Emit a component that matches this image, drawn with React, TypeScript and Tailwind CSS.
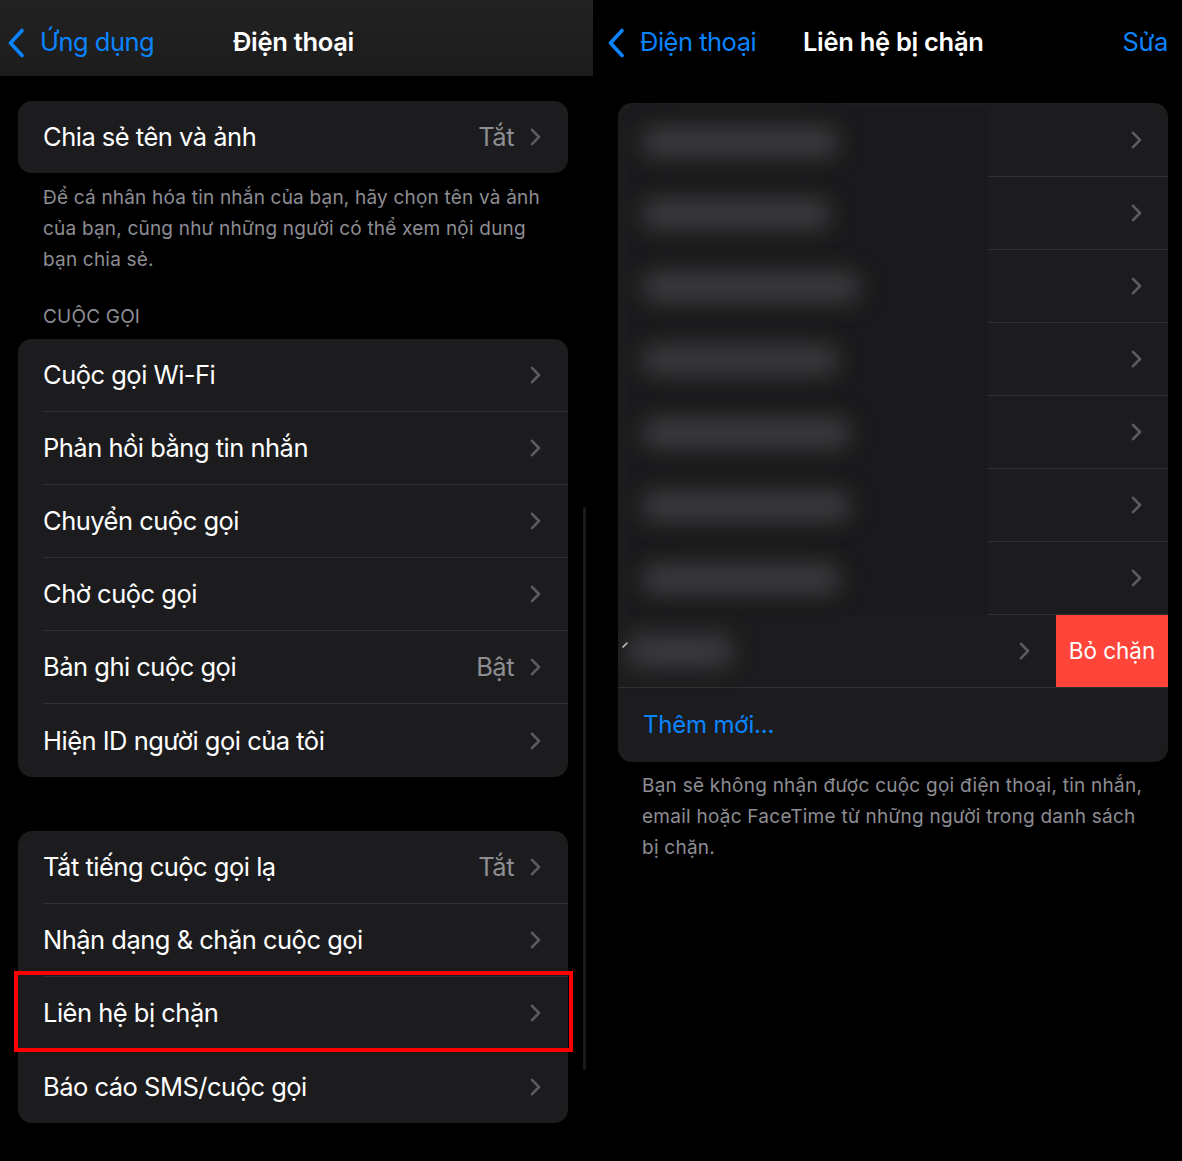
import React from "react";

const Chevron = () => (
  <svg width="11" height="18" viewBox="0 0 11 18" className="shrink-0">
    <path d="M2 1.8l7 7.2-7 7.2" fill="none" stroke="#5c5c60" strokeWidth="2.6" strokeLinecap="round" strokeLinejoin="round" />
  </svg>
);

const BackChevron = () => (
  <svg width="18" height="30" viewBox="0 0 18 30" className="shrink-0">
    <path d="M15 2.5L3.5 15 15 27.5" fill="none" stroke="#0a84ff" strokeWidth="3.6" strokeLinecap="round" strokeLinejoin="round" />
  </svg>
);

function Row({ label, value, last, boxed }: { label: string; value?: string; last?: boolean; boxed?: boolean }) {
  return (
    <div className="relative flex h-[73px] items-stretch pl-[25px]">
      <div className={last ? "flex flex-1 items-center pr-[27px]" : "flex flex-1 items-center border-b border-[#303033] pr-[27px]"}>
        <span className="flex-1 text-[25.5px] leading-none tracking-[-0.5px] text-white">{label}</span>
        {value && <span className="mr-[16px] text-[25.5px] leading-none tracking-[-0.5px] text-[#8e8e93]">{value}</span>}
        <Chevron />
      </div>
      {boxed && (
        <div className="pointer-events-none absolute -top-[6px] -bottom-[2px] -left-[4px] -right-[5px] border-4 border-[#ff0000]" />
      )}
    </div>
  );
}

const blobs = [198, 190, 220, 198, 210, 210, 200];

export default function App() {
  return (
    <div className="flex h-[1161px] w-[1182px] overflow-hidden bg-black font-['Inter','Noto_Sans',sans-serif] antialiased">
      {/* LEFT */}
      <div className="relative flex w-[593px] shrink-0 flex-col">
        <div className="relative flex h-[76px] items-center bg-gradient-to-b from-[#222222] to-[#1c1c1c] pl-[7px] pt-[9px]">
          <BackChevron />
          <span className="ml-[15px] text-[25.5px] tracking-[-0.5px] text-[#0a84ff]">Ứng dụng</span>
          <span className="absolute left-[233px] text-[25.5px] font-semibold tracking-[-0.3px] text-white">Điện thoại</span>
        </div>

        <div className="flex flex-col pl-[18px] pr-[25px] pt-[25px]">
          <div className="overflow-hidden rounded-[14px] bg-[#1c1c1e]">
            <div className="flex h-[72px] items-center pl-[25px] pr-[27px]">
              <span className="flex-1 text-[25.5px] leading-none tracking-[-0.5px] text-white">Chia sẻ tên và ảnh</span>
              <span className="mr-[16px] text-[25.5px] leading-none tracking-[-0.5px] text-[#8e8e93]">Tắt</span>
              <Chevron />
            </div>
          </div>

          <p className="pl-[25px] pt-[9px] text-[19px] leading-[31px] tracking-[0.2px] text-[#8d8d93]">
            Để cá nhân hóa tin nhắn của bạn, hãy chọn tên và ảnh
            <br />
            của bạn, cũng như những người có thể xem nội dung
            <br />
            bạn chia sẻ.
          </p>

          <p className="pl-[25px] pt-[30px] text-[19px] leading-[24px] tracking-[0.2px] text-[#8d8d93]">CUỘC GỌI</p>

          <div className="mt-[10px] overflow-hidden rounded-[14px] bg-[#1c1c1e]">
            <Row label="Cuộc gọi Wi-Fi" />
            <Row label="Phản hồi bằng tin nhắn" />
            <Row label="Chuyển cuộc gọi" />
            <Row label="Chờ cuộc gọi" />
            <Row label="Bản ghi cuộc gọi" value="Bật" />
            <Row label="Hiện ID người gọi của tôi" last />
          </div>

          <div className="mt-[54px] rounded-[14px] bg-[#1c1c1e]">
            <Row label="Tắt tiếng cuộc gọi lạ" value="Tắt" />
            <Row label="Nhận dạng & chặn cuộc gọi" />
            <Row label="Liên hệ bị chặn" boxed />
            <Row label="Báo cáo SMS/cuộc gọi" last />
          </div>
        </div>

        <div className="absolute left-[583px] top-[507px] h-[563px] w-[3px] rounded-full bg-[#1a1a1a]" />
      </div>

      {/* RIGHT */}
      <div className="flex flex-1 flex-col">
        <div className="relative flex h-[76px] items-center pl-[14px] pr-[14px] pt-[9px]">
          <BackChevron />
          <span className="ml-[15px] text-[25.5px] tracking-[-0.5px] text-[#0a84ff]">Điện thoại</span>
          <span className="absolute left-[210px] text-[25.5px] font-semibold tracking-[-0.3px] text-white">Liên hệ bị chặn</span>
          <span className="ml-auto text-[25.5px] tracking-[-0.3px] text-[#0a84ff]">Sửa</span>
        </div>

        <div className="flex flex-col pl-[25px] pr-[14px] pt-[27px]">
          <div className="overflow-hidden rounded-[14px] bg-[#1c1c1e]">
            <div className="flex">
              <div className="w-[370px] shrink-0 pl-[9px] pt-[4px]">
                <div className="flex flex-col bg-[#1a1a1c]">
                  {blobs.map((w, i) => (
                    <div key={i} className={i === 0 ? "flex h-[70px] items-center pl-[14px]" : "flex h-[73px] items-center pl-[14px]"}>
                      <div className="h-[32px] rounded-full bg-[#3a3a3d] blur-[11px]" style={{ width: w }} />
                    </div>
                  ))}
                </div>
              </div>
              <div className="flex flex-1 flex-col">
                {blobs.map((_, i) => (
                  <div key={i} className={i === 0 ? "flex h-[74px] items-center justify-end border-b border-[#303033] pr-[26px]" : "flex h-[73px] items-center justify-end border-b border-[#303033] pr-[26px]"}>
                    <Chevron />
                  </div>
                ))}
              </div>
            </div>

            <div className="flex h-[73px] border-b border-[#303033]">
              <div className="relative flex flex-1 items-center pl-[8px] pr-[26px]">
                <svg width="6" height="6" viewBox="0 0 6 6" className="absolute left-[4px] top-[27px]">
                  <path d="M1 5L5 1" stroke="#ffffff" strokeWidth="1.6" strokeLinecap="round" />
                </svg>
                <div className="h-[34px] w-[108px] rounded-full bg-[#3a3a3d] blur-[11px]" />
                <div className="flex-1" />
                <Chevron />
              </div>
              <div className="flex w-[112px] items-center justify-center bg-[#ff453a] text-[22.5px] text-white">
                Bỏ chặn
              </div>
            </div>

            <div className="flex h-[74px] items-center pl-[25px]">
              <span className="text-[24px] tracking-[-0.2px] text-[#0a84ff]">Thêm mới...</span>
            </div>
          </div>

          <p className="pl-[24px] pt-[8px] text-[19px] leading-[31px] tracking-[0.25px] text-[#8d8d93]">
            Bạn sẽ không nhận được cuộc gọi điện thoại, tin nhắn,
            <br />
            email hoặc FaceTime từ những người trong danh sách
            <br />
            bị chặn.
          </p>
        </div>
      </div>
    </div>
  );
}
